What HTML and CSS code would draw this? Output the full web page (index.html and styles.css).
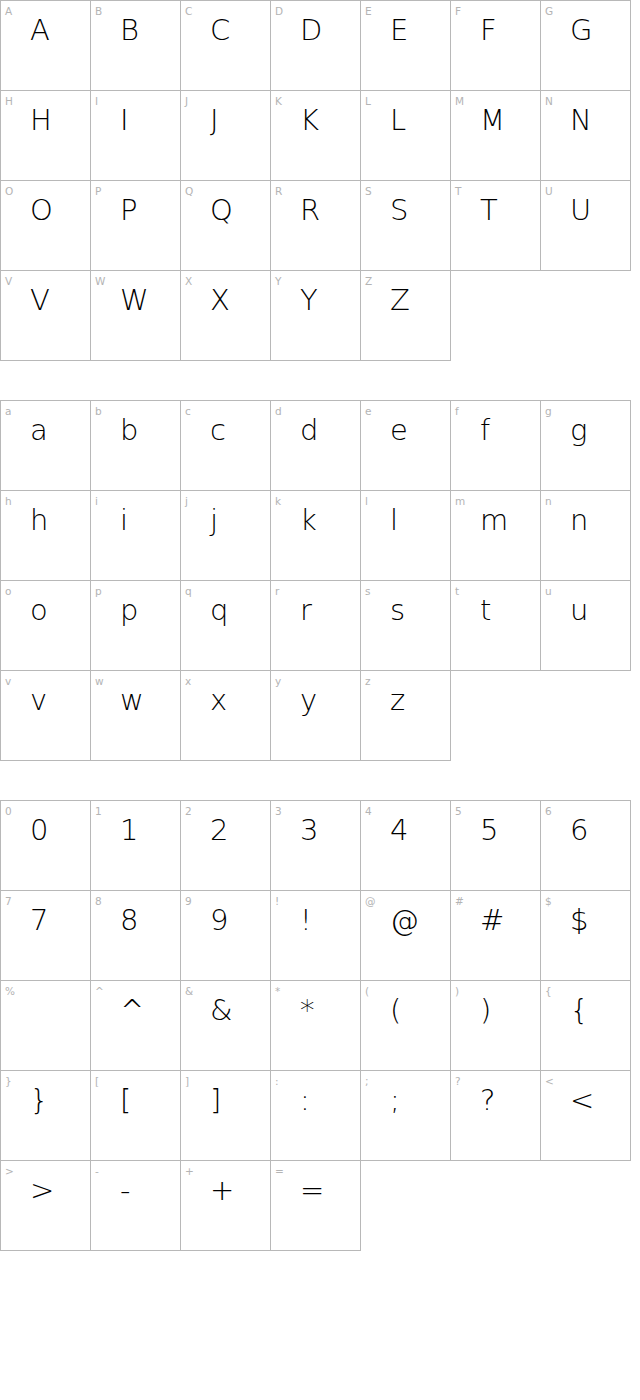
FILE: index.html
```html
<!DOCTYPE html>
<html>
<head>
<meta charset="utf-8">
<link rel="stylesheet" href="styles.css">
</head>
<body>
<div class="sheet">
  <div class="block">
    <div class="cell"><span class="lbl">A</span><span class="ch">A</span></div>
    <div class="cell"><span class="lbl">B</span><span class="ch">B</span></div>
    <div class="cell"><span class="lbl">C</span><span class="ch">C</span></div>
    <div class="cell"><span class="lbl">D</span><span class="ch">D</span></div>
    <div class="cell"><span class="lbl">E</span><span class="ch">E</span></div>
    <div class="cell"><span class="lbl">F</span><span class="ch">F</span></div>
    <div class="cell"><span class="lbl">G</span><span class="ch">G</span></div>
    <div class="cell"><span class="lbl">H</span><span class="ch">H</span></div>
    <div class="cell"><span class="lbl">I</span><span class="ch">I</span></div>
    <div class="cell"><span class="lbl">J</span><span class="ch">J</span></div>
    <div class="cell"><span class="lbl">K</span><span class="ch">K</span></div>
    <div class="cell"><span class="lbl">L</span><span class="ch">L</span></div>
    <div class="cell"><span class="lbl">M</span><span class="ch">M</span></div>
    <div class="cell"><span class="lbl">N</span><span class="ch">N</span></div>
    <div class="cell"><span class="lbl">O</span><span class="ch">O</span></div>
    <div class="cell"><span class="lbl">P</span><span class="ch">P</span></div>
    <div class="cell"><span class="lbl">Q</span><span class="ch">Q</span></div>
    <div class="cell"><span class="lbl">R</span><span class="ch">R</span></div>
    <div class="cell"><span class="lbl">S</span><span class="ch">S</span></div>
    <div class="cell"><span class="lbl">T</span><span class="ch">T</span></div>
    <div class="cell"><span class="lbl">U</span><span class="ch">U</span></div>
    <div class="cell"><span class="lbl">V</span><span class="ch">V</span></div>
    <div class="cell"><span class="lbl">W</span><span class="ch">W</span></div>
    <div class="cell"><span class="lbl">X</span><span class="ch">X</span></div>
    <div class="cell"><span class="lbl">Y</span><span class="ch">Y</span></div>
    <div class="cell"><span class="lbl">Z</span><span class="ch">Z</span></div>
  </div>
  <div class="block">
    <div class="cell"><span class="lbl">a</span><span class="ch">a</span></div>
    <div class="cell"><span class="lbl">b</span><span class="ch">b</span></div>
    <div class="cell"><span class="lbl">c</span><span class="ch">c</span></div>
    <div class="cell"><span class="lbl">d</span><span class="ch">d</span></div>
    <div class="cell"><span class="lbl">e</span><span class="ch">e</span></div>
    <div class="cell"><span class="lbl">f</span><span class="ch">f</span></div>
    <div class="cell"><span class="lbl">g</span><span class="ch">g</span></div>
    <div class="cell"><span class="lbl">h</span><span class="ch">h</span></div>
    <div class="cell"><span class="lbl">i</span><span class="ch">i</span></div>
    <div class="cell"><span class="lbl">j</span><span class="ch">j</span></div>
    <div class="cell"><span class="lbl">k</span><span class="ch">k</span></div>
    <div class="cell"><span class="lbl">l</span><span class="ch">l</span></div>
    <div class="cell"><span class="lbl">m</span><span class="ch">m</span></div>
    <div class="cell"><span class="lbl">n</span><span class="ch">n</span></div>
    <div class="cell"><span class="lbl">o</span><span class="ch">o</span></div>
    <div class="cell"><span class="lbl">p</span><span class="ch">p</span></div>
    <div class="cell"><span class="lbl">q</span><span class="ch">q</span></div>
    <div class="cell"><span class="lbl">r</span><span class="ch">r</span></div>
    <div class="cell"><span class="lbl">s</span><span class="ch">s</span></div>
    <div class="cell"><span class="lbl">t</span><span class="ch">t</span></div>
    <div class="cell"><span class="lbl">u</span><span class="ch">u</span></div>
    <div class="cell"><span class="lbl">v</span><span class="ch">v</span></div>
    <div class="cell"><span class="lbl">w</span><span class="ch">w</span></div>
    <div class="cell"><span class="lbl">x</span><span class="ch">x</span></div>
    <div class="cell"><span class="lbl">y</span><span class="ch">y</span></div>
    <div class="cell"><span class="lbl">z</span><span class="ch">z</span></div>
  </div>
  <div class="block">
    <div class="cell"><span class="lbl">0</span><span class="ch">0</span></div>
    <div class="cell"><span class="lbl">1</span><span class="ch">1</span></div>
    <div class="cell"><span class="lbl">2</span><span class="ch">2</span></div>
    <div class="cell"><span class="lbl">3</span><span class="ch">3</span></div>
    <div class="cell"><span class="lbl">4</span><span class="ch">4</span></div>
    <div class="cell"><span class="lbl">5</span><span class="ch">5</span></div>
    <div class="cell"><span class="lbl">6</span><span class="ch">6</span></div>
    <div class="cell"><span class="lbl">7</span><span class="ch">7</span></div>
    <div class="cell"><span class="lbl">8</span><span class="ch">8</span></div>
    <div class="cell"><span class="lbl">9</span><span class="ch">9</span></div>
    <div class="cell"><span class="lbl">!</span><span class="ch">!</span></div>
    <div class="cell"><span class="lbl">@</span><span class="ch">@</span></div>
    <div class="cell"><span class="lbl">#</span><span class="ch">#</span></div>
    <div class="cell"><span class="lbl">$</span><span class="ch">$</span></div>
    <div class="cell"><span class="lbl">%</span><span class="ch"></span></div>
    <div class="cell"><span class="lbl">^</span><span class="ch">^</span></div>
    <div class="cell"><span class="lbl">&amp;</span><span class="ch">&amp;</span></div>
    <div class="cell"><span class="lbl">*</span><span class="ch">*</span></div>
    <div class="cell"><span class="lbl">(</span><span class="ch">(</span></div>
    <div class="cell"><span class="lbl">)</span><span class="ch">)</span></div>
    <div class="cell"><span class="lbl">{</span><span class="ch">{</span></div>
    <div class="cell"><span class="lbl">}</span><span class="ch">}</span></div>
    <div class="cell"><span class="lbl">[</span><span class="ch">[</span></div>
    <div class="cell"><span class="lbl">]</span><span class="ch">]</span></div>
    <div class="cell"><span class="lbl">:</span><span class="ch">:</span></div>
    <div class="cell"><span class="lbl">;</span><span class="ch">;</span></div>
    <div class="cell"><span class="lbl">?</span><span class="ch">?</span></div>
    <div class="cell"><span class="lbl">&lt;</span><span class="ch">&lt;</span></div>
    <div class="cell"><span class="lbl">&gt;</span><span class="ch">&gt;</span></div>
    <div class="cell"><span class="lbl">-</span><span class="ch">-</span></div>
    <div class="cell"><span class="lbl">+</span><span class="ch">+</span></div>
    <div class="cell"><span class="lbl">=</span><span class="ch">=</span></div>
  </div>
</div>
</body>
</html>
```

FILE: styles.css
```css
html, body {
  margin: 0;
  padding: 0;
  background: #ffffff;
}

.sheet {
  display: flex;
  flex-direction: column;
  gap: 39px;
}

.block {
  display: grid;
  grid-template-columns: repeat(7, 90px);
  grid-auto-rows: 90px;
  width: 631px;
  padding-bottom: 1px;
}

.cell {
  width: 89px;
  height: 89px;
  border: 1px solid #b8b8b8;
  display: flex;
  flex-direction: column;
  box-sizing: content-box;
}

.lbl {
  display: block;
  font-family: "DejaVu Sans", sans-serif;
  font-weight: 400;
  font-size: 10.5px;
  line-height: 13px;
  color: #b4b4b4;
  padding: 4px 0 0 4px;
  height: 13px;
}

.ch {
  display: block;
  font-family: "DejaVu Sans", sans-serif;
  font-weight: 200;
  font-size: 29px;
  line-height: 24px;
  color: #000000;
  padding: 0 0 0 29px;
}
```
